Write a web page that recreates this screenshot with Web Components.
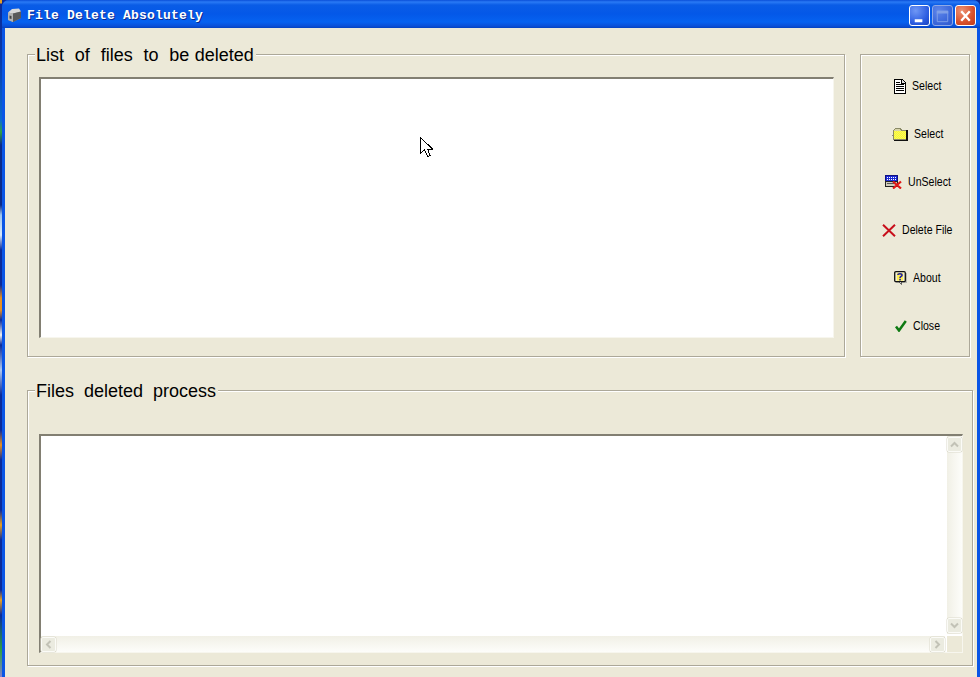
<!DOCTYPE html>
<html>
<head>
<meta charset="utf-8">
<title>File Delete Absolutely</title>
<style>
  html, body { margin: 0; padding: 0; background: #0a2a9a; overflow: hidden; }
</style>
</head>
<body>
<xp-desktop>
  <xp-window caption="File Delete Absolutely">
    <div style="display:flex;gap:15px">
      <group-box label="List  of  files  to  be deleted" style="--legend-word-spacing:.4px;flex:0 0 818px;height:303px;padding:22px 10px 18px 11px">
        <list-box style="height:100%"></list-box>
      </group-box>
      <group-box style="flex:0 0 110px;height:303px">
        <tool-button icon="doc" label="Select"></tool-button>
        <tool-button icon="folder" label="Select"></tool-button>
        <tool-button icon="unselect" label="UnSelect"></tool-button>
        <tool-button icon="delete" label="Delete File"></tool-button>
        <tool-button icon="about" label="About"></tool-button>
        <tool-button icon="close" label="Close"></tool-button>
      </group-box>
    </div>
    <group-box label="Files  deleted  process" style="display:block;margin-top:33px;height:276px;padding:43px 9px 12px 11px">
      <list-box scrollbars style="height:100%"></list-box>
    </group-box>
  </xp-window>
  <mouse-pointer></mouse-pointer>
</xp-desktop>

<script>
const ICONS = {
  doc: `<svg width="12" height="15" viewBox="0 0 12 15" shape-rendering="crispEdges">
    <path d="M.5.5H8L11.5 4V14.5H.5Z" fill="#fff" stroke="#000"/>
    <path d="M7.5 .5V4.5H11.5" fill="#ddd" stroke="#000"/>
    <path d="M2 3.5H6M2 5.5H10M2 7.5H10M2 9.5H10M2 11.5H10" stroke="#000"/>
  </svg>`,
  folder: `<svg width="16" height="13" viewBox="0 0 16 13" shape-rendering="crispEdges">
    <defs><pattern id="dither" width="2" height="2" patternUnits="userSpaceOnUse">
      <rect width="2" height="2" fill="#ffff20"/><rect width="1" height="1" fill="#f0f070"/><rect x="1" y="1" width="1" height="1" fill="#f0f070"/>
    </pattern></defs>
    <path d="M1.5 2.5 3.5 .5H8.5L9.5 2.5H14.5V11.5H1.5Z" fill="#d8d4a8" stroke="#8a8a66"/>
    <rect x="2" y="3" width="12" height="8" fill="url(#dither)"/>
    <path d="M15 2V12.5H2" fill="none" stroke="#111" stroke-width="1.6"/>
    <path d="M0 7h1" stroke="#888"/>
  </svg>`,
  unselect: `<svg width="17" height="14" viewBox="0 0 17 14" shape-rendering="crispEdges">
    <rect x=".5" y=".5" width="12" height="6" fill="#1c2cd8" stroke="#101080"/>
    <path d="M2 2.5h1M4 2.5h1M6 2.5h1M8 2.5h1M10 2.5h1M2 4.5h1M4 4.5h1M6 4.5h1M8 4.5h1M10 4.5h1" stroke="#fff"/>
    <rect x=".5" y="6.5" width="12" height="5" fill="#cfcbbb" stroke="#222"/>
    <path d="M2 8.5h7" stroke="#555"/>
    <g shape-rendering="auto"><path d="M8 6.5 16 13.5M16 6.5 8 13.5" stroke="#e01818" stroke-width="2.2"/></g>
  </svg>`,
  delete: `<svg width="14" height="13" viewBox="0 0 14 13">
    <path d="M1 .8 13 12.2M13 .8 1 12.2" stroke="#c8101c" stroke-width="2"/>
  </svg>`,
  about: `<svg width="13" height="14" viewBox="0 0 13 14">
    <rect x="2" y="2" width="11" height="10" fill="#b8b8b0"/>
    <rect x=".7" y=".7" width="10.6" height="10" rx="1.2" fill="#f2f0d0" stroke="#111" stroke-width="1.3"/>
    <path d="M7.5 11V13.5L5 11" fill="#ccc" stroke="#444" stroke-width=".8"/>
    <rect x="3" y="2" width="6" height="7.6" fill="#ffee50"/>
    <path d="M3.8 4C4 2.3 8 2.3 8 4.2 8 5.5 6 5.4 6 7" fill="none" stroke="#2020a0" stroke-width="1.6"/>
    <rect x="5.2" y="7.8" width="1.7" height="1.6" fill="#2020a0"/>
  </svg>`,
  close: `<svg width="12" height="12" viewBox="0 0 12 12">
    <path d="M1 6.5 4 10.5 10.8 1" fill="none" stroke="#0e7a12" stroke-width="2.5"/>
  </svg>`
};

const LABEL_SQUEEZE = 0.88;

class ToolButton extends HTMLElement {
  constructor() {
    super();
    this.attachShadow({ mode: "open" });
    const icon = this.getAttribute("icon");
    this.shadowRoot.innerHTML = `
      <style>
        :host {
          display: flex; align-items: center; justify-content: center; gap: 6px;
          height: 48px; padding-left: 5px; box-sizing: border-box;
          font: 12px "Liberation Sans", Arial, sans-serif;
          color: #000;
        }
        svg { display: block; }
        span { display: block; white-space: pre; transform: scaleX(${LABEL_SQUEEZE}); transform-origin: left center; }
      </style>
      ${ICONS[icon]}<span>${this.getAttribute("label")}</span>
    `;
  }

  connectedCallback() {
    // the original label face is narrow, take back the width the squeeze leaves empty
    const label = this.shadowRoot.querySelector("span");
    label.style.marginRight = `${-label.offsetWidth * (1 - LABEL_SQUEEZE)}px`;
  }
}

class GroupBox extends HTMLElement {
  constructor() {
    super();
    this.attachShadow({ mode: "open" });
    const label = this.getAttribute("label");
    this.shadowRoot.innerHTML = `
      <style>
        :host {
          display: block; position: relative; box-sizing: border-box;
          border: 1px solid #aca899;
          box-shadow: inset 1px 1px 0 #fff, 1px 1px 0 #fff;
        }
        .legend {
          position: absolute; left: 7px; top: -9px; padding: 0 2px 0 1px;
          background: #ece9d8; color: #000; white-space: pre;
          font: 18px/18px "Liberation Sans", Arial, sans-serif;
          word-spacing: var(--legend-word-spacing, 0);
        }
        .top { padding-top: 7px; }
      </style>
      ${label ? `<div class="legend">${label}</div>` : ""}
      <div class="${label ? "" : "top"}" style="height:100%;box-sizing:border-box"><slot></slot></div>
    `;
  }
}

class ListBox extends HTMLElement {
  constructor() {
    super();
    this.attachShadow({ mode: "open" });
    const bars = this.hasAttribute("scrollbars");
    this.shadowRoot.innerHTML = `
      <style>
        :host {
          display: block; box-sizing: border-box; background: #fff;
          border-style: solid; border-width: 2px 1px 1px 2px;
          border-color: #827f72 #f7f6ee #f7f6ee #827f72;
        }
        .grid {
          display: grid; height: 100%;
          grid-template-columns: 1fr 15px; grid-template-rows: 1fr 16px;
          gap: 2px;
        }
        .v { grid-column: 2; display: flex; flex-direction: column; padding: 1px 0; background: linear-gradient(90deg, #f1f0e6, #fdfdfa); }
        .h { grid-row: 2; display: flex; padding-top: 1px; background: linear-gradient(180deg, #f1f0e6, #fdfdfa); }
        .track { flex: 1; }
        .corner { background: #ece9d8; }
        .btn { flex: 0 0 15px; height: 15px; width: 15px; box-sizing: border-box; background: #ebebe0; border: 1px solid #fbfbf7; border-radius: 2px; display: flex; align-items: center; justify-content: center; box-shadow: 0 0 0 .5px #dcdacb; }
        .btn svg { display: block; }
      </style>
      ${bars ? `
        <div class="grid">
          <div class="content"><slot></slot></div>
          <div class="v">
            <div class="btn"><svg width="9" height="7" viewBox="0 0 9 7"><path d="M1 5.5 4.5 2 8 5.5" fill="none" stroke="#c2c2b6" stroke-width="2"/></svg></div>
            <div class="track"></div>
            <div class="btn"><svg width="9" height="7" viewBox="0 0 9 7"><path d="M1 1.5 4.5 5 8 1.5" fill="none" stroke="#c2c2b6" stroke-width="2"/></svg></div>
          </div>
          <div class="h">
            <div class="btn"><svg width="7" height="9" viewBox="0 0 7 9"><path d="M5.5 1 2 4.5 5.5 8" fill="none" stroke="#c2c2b6" stroke-width="2"/></svg></div>
            <div class="track"></div>
            <div class="btn"><svg width="7" height="9" viewBox="0 0 7 9"><path d="M1.5 1 5 4.5 1.5 8" fill="none" stroke="#c2c2b6" stroke-width="2"/></svg></div>
          </div>
          <div class="corner"></div>
        </div>` : `<slot></slot>`}
    `;
  }
}

class CaptionButton extends HTMLElement {
  constructor() {
    super();
    this.attachShadow({ mode: "open" });
    const kind = this.getAttribute("kind");
    const glyphs = {
      min: `<path d="M5 14H13V17H5Z" fill="#fff"/>`,
      max: `<path d="M4.5 5.5H15.5V16.5H4.5Z" fill="none" stroke="#7f9fe8"/><path d="M4 5H16V8H4Z" fill="#7f9fe8"/>`,
      close: `<path d="M5.5 5.5 14.5 15.5M14.5 5.5 5.5 15.5" stroke="#fff" stroke-width="2.4"/>`
    };
    const bg = {
      min: "radial-gradient(circle at 30% 25%, #6f97f5, #2a5be0 65%, #1c44c0)",
      max: "radial-gradient(circle at 30% 25%, #5f86ea, #3a66da 65%, #3058cc)",
      close: "radial-gradient(circle at 30% 25%, #ec9274, #d8502c 60%, #bf3c1c)"
    };
    this.shadowRoot.innerHTML = `
      <style>
        :host {
          display: block; width: 21px; height: 21px; box-sizing: border-box;
          border: 1px solid ${kind === "max" ? "#8fa9e6" : "#fff"}; border-radius: 3px;
          background: ${bg[kind]};
        }
        svg { display: block; width: 19px; height: 19px; }
      </style>
      <svg viewBox="0 0 20 20">${glyphs[kind]}</svg>
    `;
  }
}

class XpWindow extends HTMLElement {
  constructor() {
    super();
    this.attachShadow({ mode: "open" });
    this.shadowRoot.innerHTML = `
      <style>
        :host {
          display: flex; flex-direction: column; flex: 1; min-width: 0;
          height: 677px; overflow: hidden; background: #0a55e6;
          border-radius: 7px 7px 0 0;
        }
        .bar {
          flex: 0 0 28px; display: flex; align-items: center; box-sizing: border-box;
          padding: 3px 4px 0 5px; gap: 5px;
          background: linear-gradient(180deg, #0a4fd8 0, #2a7af5 2px, #0a5ce6 5px, #0458e8 14px, #0662f0 22px, #0a50d8 26px, #0442c0 28px);
        }
        .icon { display: block; }
        .caption {
          flex: 1; color: #fff; white-space: pre;
          font: bold 13px "Liberation Mono", "Courier New", monospace;
          letter-spacing: .2px; text-shadow: 1px 1px 0 #0a2a8f;
        }
        .buttons { display: flex; gap: 2px; }
        .frame { flex: 1; padding: 0 3px 0 3px; min-height: 0; background: #0a55e6; }
        .body { height: 100%; box-sizing: border-box; padding: 26px 4px 0 22px; background: #ece9d8; overflow: hidden; }
      </style>
      <div class="bar">
        <svg class="icon" width="15" height="15" viewBox="0 0 15 15">
          <path d="M1 4.5 9 2.5 14 3.5 14 10 6 14 1 12Z" fill="#8c8c8c"/>
          <path d="M1 4.5 5 1 12 .5 14 3.5 6 5.5Z" fill="#d9d9d9"/>
          <path d="M6 5.5 14 3.5V10L6 14Z" fill="#5a5a5a"/>
          <path d="M1 4.5 6 5.5V14L1 12Z" fill="#b4b4b4"/>
          <path d="M2.5 7.5 4.5 8V11L2.5 10.5Z" fill="#444"/>
        </svg>
        <span class="caption">${this.getAttribute("caption")}</span>
        <div class="buttons">
          <caption-button kind="min"></caption-button>
          <caption-button kind="max"></caption-button>
          <caption-button kind="close"></caption-button>
        </div>
      </div>
      <div class="frame"><div class="body"><slot></slot></div></div>
    `;
  }
}

class XpDesktop extends HTMLElement {
  constructor() {
    super();
    this.attachShadow({ mode: "open" });
    this.shadowRoot.innerHTML = `
      <style>
        :host { display: flex; position: relative; width: 980px; height: 677px; overflow: hidden; }
        .strip {
          flex: 0 0 2px;
          background: linear-gradient(180deg,
            #e8a020 0, #e8a020 3px, #0a2a9a 4px, #0a3aa8 60px, #0a6ad0 120px, #30a040 132px,
            #0a2a8a 145px, #0a2a8a 205px, #9cc4f0 215px, #d8e8fa 235px, #0a2a9a 250px,
            #0a2a9a 285px, #e89020 298px, #e89020 310px, #0a2a9a 320px, #f0f0f0 335px, #0a2a9a 345px,
            #b0c8f0 370px, #0a2a9a 395px, #0a2a9a 430px, #e89020 445px, #0a2a9a 460px,
            #0a2a9a 510px, #e8a020 525px, #0a2a9a 540px, #0a2a9a 590px, #e8a020 600px, #0a2a9a 615px, #30a040 650px, #8080d0 677px);
        }
      </style>
      <div class="strip"></div>
      <slot></slot>
    `;
  }
}

// the pointer sits over the list, it was caught in the screenshot
class MousePointer extends HTMLElement {
  constructor() {
    super();
    this.attachShadow({ mode: "open" });
    this.shadowRoot.innerHTML = `
      <style>
        :host { position: absolute; left: 420px; top: 137px; width: 13px; height: 21px; }
        svg { display: block; }
      </style>
      <svg width="13" height="21" viewBox="0 0 13 21" shape-rendering="crispEdges">
        <path d="M.5.5V16.5L4.5 12.5 7.5 19.5 10 18.5 7.5 12H12.5Z" fill="#fff" stroke="#000"/>
      </svg>
    `;
  }
}

customElements.define("tool-button", ToolButton);
customElements.define("group-box", GroupBox);
customElements.define("list-box", ListBox);
customElements.define("caption-button", CaptionButton);
customElements.define("xp-window", XpWindow);
customElements.define("xp-desktop", XpDesktop);
customElements.define("mouse-pointer", MousePointer);
</script>
</body>
</html>
